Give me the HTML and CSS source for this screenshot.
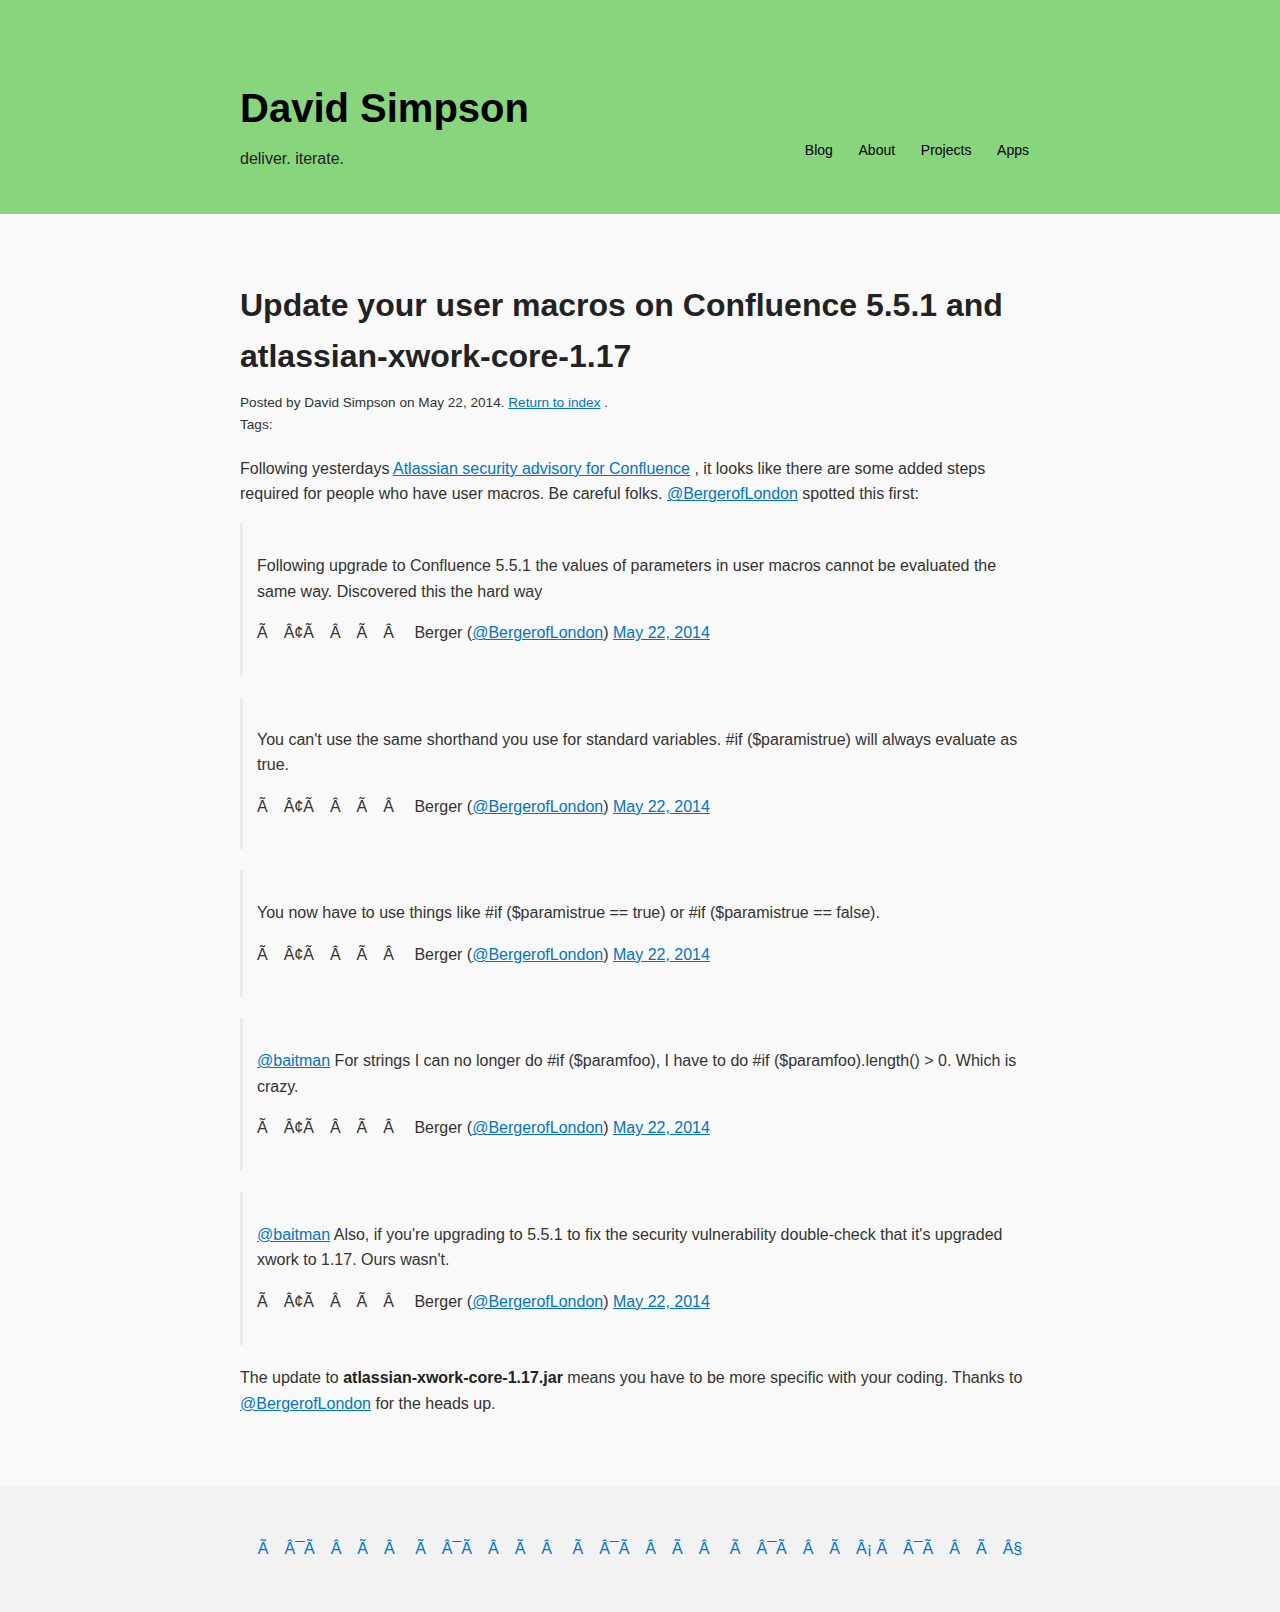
FILE: index.html
```html
<!DOCTYPE html>
<html lang="en">
<head>
<meta charset="utf-8">
<title>Update your user macros on Confluence 5.5.1 and atlassian-xwork-core-1.17</title>
<link rel="stylesheet" href="styles.css">
</head>
<body>
<header class="site-header">
  <div class="wrap header-inner">
    <div class="brand">
      <h1 class="site-title">David Simpson</h1>
      <p class="tagline">deliver. iterate.</p>
    </div>
    <nav class="nav">
      <a href="#">Blog</a>
      <a href="#">About</a>
      <a href="#">Projects</a>
      <a href="#">Apps</a>
    </nav>
  </div>
</header>

<main class="wrap content">
  <article>
    <h1 class="post-title">Update your user macros on Confluence 5.5.1 and atlassian-xwork-core-1.17</h1>
    <div class="meta">Posted by David Simpson on May 22, 2014. <a href="#">Return to index</a> .<br>Tags:</div>

    <p>Following yesterdays <a href="#">Atlassian security advisory for Confluence</a> , it looks like there are some added steps required for people who have user macros. Be careful folks. <a href="#">@BergerofLondon</a> spotted this first:</p>

    <blockquote class="tweet">
      <p>Following upgrade to Confluence 5.5.1 the values of parameters in user macros cannot be evaluated the same way. Discovered this the hard way</p>Ã&#x2003;Â¢Ã&#x2003;Â&#x2003;Ã&#x2003;Â&#x2003; Berger (<a href="#">@BergerofLondon</a>) <a href="#">May 22, 2014</a>
    </blockquote>

    <blockquote class="tweet">
      <p>You can't use the same shorthand you use for standard variables. #if ($paramistrue) will always evaluate as true.</p>Ã&#x2003;Â¢Ã&#x2003;Â&#x2003;Ã&#x2003;Â&#x2003; Berger (<a href="#">@BergerofLondon</a>) <a href="#">May 22, 2014</a>
    </blockquote>

    <blockquote class="tweet">
      <p>You now have to use things like #if ($paramistrue == true) or #if ($paramistrue == false).</p>Ã&#x2003;Â¢Ã&#x2003;Â&#x2003;Ã&#x2003;Â&#x2003; Berger (<a href="#">@BergerofLondon</a>) <a href="#">May 22, 2014</a>
    </blockquote>

    <blockquote class="tweet">
      <p><a href="#">@baitman</a> For strings I can no longer do #if ($paramfoo), I have to do #if ($paramfoo).length() &gt; 0. Which is crazy.</p>Ã&#x2003;Â¢Ã&#x2003;Â&#x2003;Ã&#x2003;Â&#x2003; Berger (<a href="#">@BergerofLondon</a>) <a href="#">May 22, 2014</a>
    </blockquote>

    <blockquote class="tweet">
      <p><a href="#">@baitman</a> Also, if you're upgrading to 5.5.1 to fix the security vulnerability double-check that it's upgraded xwork to 1.17. Ours wasn't.</p>Ã&#x2003;Â¢Ã&#x2003;Â&#x2003;Ã&#x2003;Â&#x2003; Berger (<a href="#">@BergerofLondon</a>) <a href="#">May 22, 2014</a>
    </blockquote>

    <p class="last">The update to <strong>atlassian-xwork-core-1.17.jar</strong> means you have to be more specific with your coding. Thanks to <a href="#">@BergerofLondon</a> for the heads up.</p>
  </article>
</main>

<footer class="site-footer">
  <div class="wrap footer-links"><a href="#">Ã&#x2003;Â¯Ã&#x2003;Â&#x2003;Ã&#x2003;Â&#x2003;</a> <a href="#">Ã&#x2003;Â¯Ã&#x2003;Â&#x2003;Ã&#x2003;Â&#x2003;</a> <a href="#">Ã&#x2003;Â¯Ã&#x2003;Â&#x2003;Ã&#x2003;Â&#x2003;</a> <a href="#">Ã&#x2003;Â¯Ã&#x2003;Â&#x2003;Ã&#x2003;Â¡</a> <a href="#">Ã&#x2003;Â¯Ã&#x2003;Â&#x2003;Ã&#x2003;Â§</a></div>
</footer>
</body>
</html>
```

FILE: styles.css
```css
html, body {
  margin: 0;
  padding: 0;
}

body {
  background: #f9f9f9;
  color: #333;
  font-family: "Liberation Sans", Arial, Helvetica, sans-serif;
  font-size: 16px;
  line-height: 1.6;
}

a {
  color: #0074cc;
  text-decoration: underline;
}

.wrap {
  width: 800px;
  margin: 0 auto;
}

/* Header */
.site-header {
  background: #88d57d;
  padding: 84.4px 0 42.2px;
}

.header-inner {
  display: flex;
  justify-content: space-between;
  align-items: flex-start;
}

.site-title {
  margin: 0;
  font-size: 40px;
  line-height: 49px;
  font-weight: 700;
  color: #000;
}

.tagline {
  margin: 12.4px 0 0;
  font-size: 16px;
  line-height: 25.6px;
  color: #222;
}

.nav {
  display: flex;
  gap: 25.7px;
  margin-top: 54.8px;
  padding-right: 11px;
  font-size: 14px;
  line-height: 22.4px;
}

.nav a {
  color: #000;
  text-decoration: none;
}

/* Content */
.content {
  padding: 66.4px 0 53px;
}

.post-title {
  margin: 0;
  font-size: 32px;
  line-height: 51.2px;
  font-weight: 700;
  color: #222;
}

.meta {
  margin: 9.6px 0 20.4px;
  font-size: 13.6px;
  line-height: 1.6;
  color: #333;
}

p {
  margin: 0 0 16px;
}

.tweet {
  margin: 0 0 20.8px;
  padding: 30px 14px;
  border-left: 3px solid #ebebeb;
}

.tweet p {
  margin: 0 0 16px;
}

strong {
  font-weight: 700;
  color: #222;
}

/* Footer */
.site-footer {
  background: #f2f2f2;
  padding: 50px 0 53px;
}

.footer-links {
  text-align: center;
  line-height: 25.6px;
}

.footer-links a {
  text-decoration: none;
}
```
